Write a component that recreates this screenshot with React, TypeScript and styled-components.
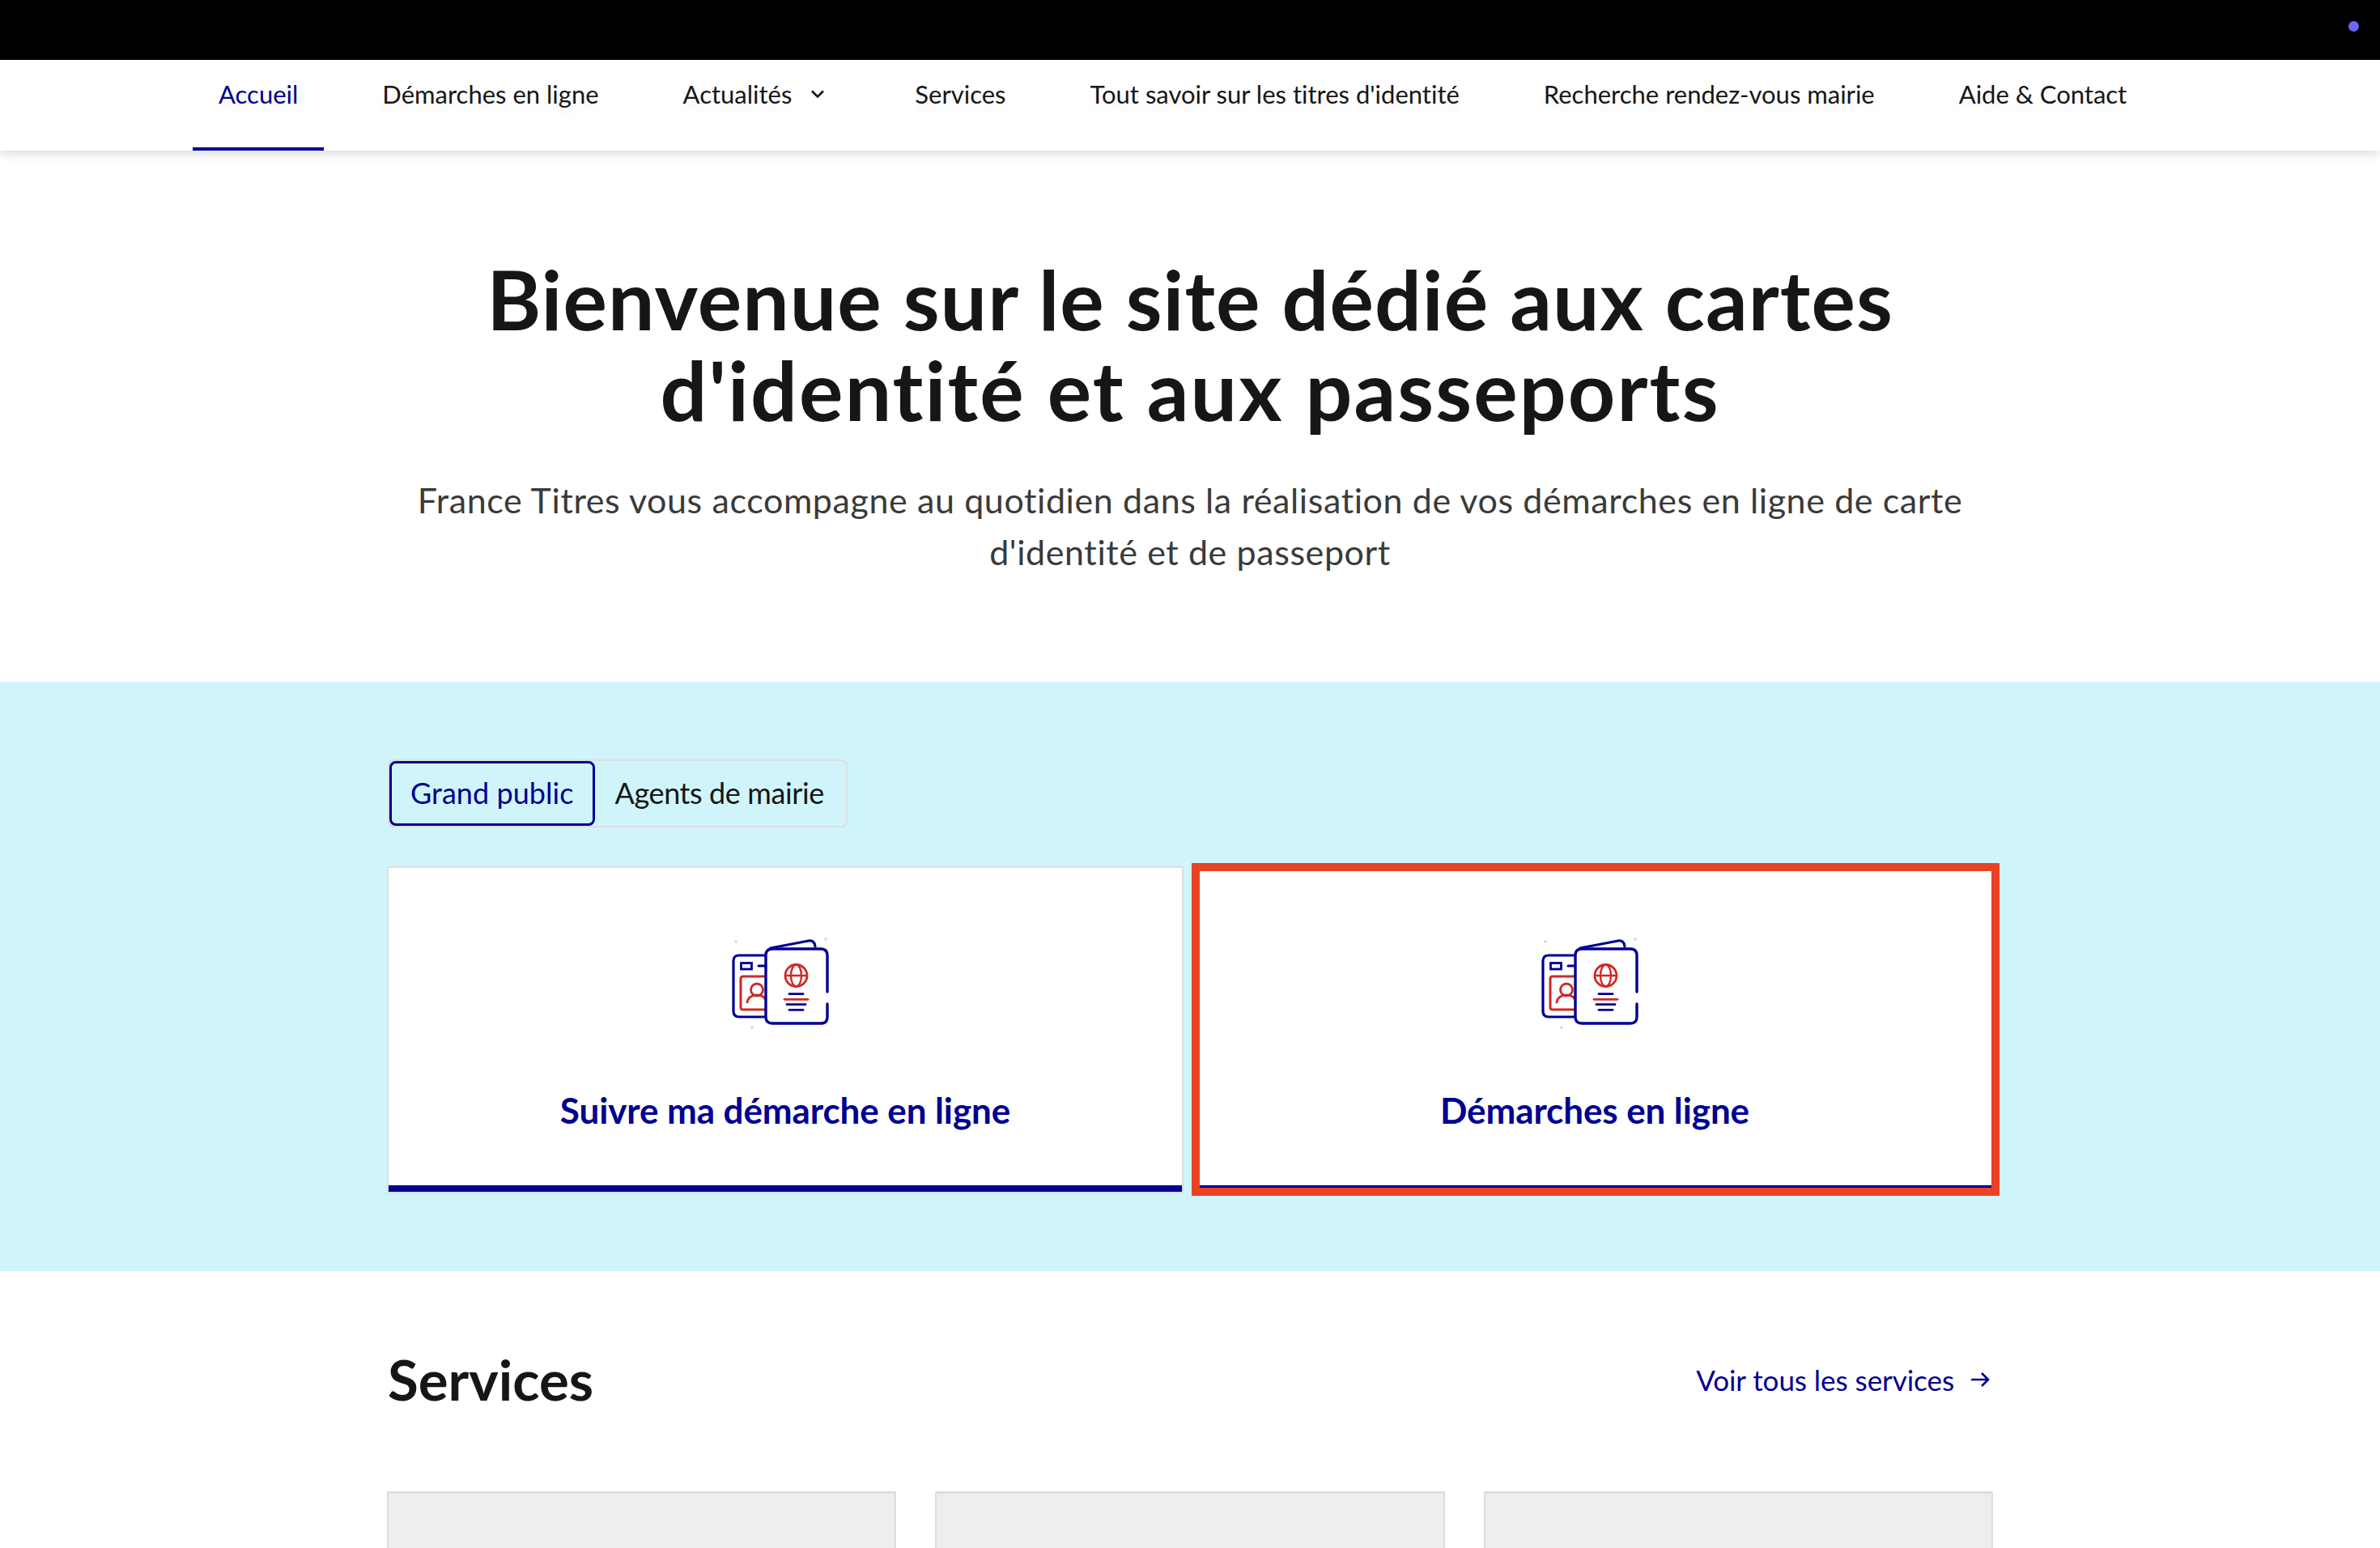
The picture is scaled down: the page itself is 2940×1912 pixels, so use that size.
import React from "react";
import styled, { createGlobalStyle } from "styled-components";

const Global = createGlobalStyle`
  html, body { margin: 0; padding: 0; height: 1912px; overflow: hidden; background: #fff; }
  body { font-family: "Lato", "Liberation Sans", sans-serif; color: #161616; }
  * { box-sizing: border-box; }
`;

const Page = styled.div`
  width: 2940px;
  height: 1912px;
  overflow: hidden;
`;
const TopBar = styled.div`
  height: 74px;
  background: #000;
  display: flex;
  justify-content: flex-end;
  align-items: flex-start;
  padding: 26px 26px 0 0;
`;
const Dot = styled.span`
  width: 13px;
  height: 13px;
  border-radius: 50%;
  background: #6a6af4;
`;
const Nav = styled.nav`
  height: 112px;
  background: #fff;
  display: flex;
  gap: 40px;
  padding-left: 238px;
  box-shadow: 0 4px 12px rgba(0, 0, 22, 0.14);
  position: relative;
`;
const NavItem = styled.a<{ $active?: boolean }>`
  display: flex;
  align-items: center;
  gap: 16px;
  height: 112px;
  padding: 0 32px 29px;
  font-size: 31px;
  letter-spacing: 0px;
  font-variant-ligatures: none;
  color: ${(p) => (p.$active ? "#000091" : "#161616")};
  box-shadow: ${(p) => (p.$active ? "inset 0 -4px 0 #000091" : "none")};
  text-shadow: 0 8px 10px rgba(0, 0, 0, 0.06);
  white-space: nowrap;
`;
const Hero = styled.section`
  padding: 127px 0 127px;
  text-align: center;
`;
const Title = styled.h1`
  margin: 0 0 49px;
  font-size: 102px;
  line-height: 112px;
  font-weight: 700;
  font-variant-ligatures: none;
  color: #161616;
`;
const TitleLine = styled.span<{ $spacing: number }>`
  display: block;
  letter-spacing: ${(p) => p.$spacing}px;
`;
const Lead = styled.p`
  margin: 0 0 1px;
  font-size: 43px;
  line-height: 64px;
  letter-spacing: 0.6px;
  color: #3a3a3a;
`;
const Band = styled.section`
  background: #cff5fb;
  padding: 96px 478px 96px;
`;
const Tabs = styled.div`
  display: inline-flex;
  vertical-align: top;
  height: 84px;
  border: 2px solid #ddd;
  border-radius: 8px;
  margin-left: 1px;
`;
const Tab = styled.div<{ $active?: boolean }>`
  display: flex;
  align-items: center;
  padding: 0 ${(p) => (p.$active ? "23px" : "24px")} 3px;
  padding-left: ${(p) => (p.$active ? "23px" : "22px")};
  font-size: 36px;
  letter-spacing: ${(p) => (p.$active ? "0.05px" : "-0.4px")};
  font-variant-ligatures: none;
  color: ${(p) => (p.$active ? "#000091" : "#161616")};
  border: ${(p) => (p.$active ? "3px solid #000091" : "3px solid transparent")};
  border-radius: 8px;
  white-space: nowrap;
`;
const TabsRow = styled.div`
  height: 84px;
  margin-bottom: 48px;
`;
const CardGrid = styled.div`
  display: grid;
  grid-template-columns: 1fr 1fr;
  gap: 16px;
`;
const Card = styled.div`
  position: relative;
  height: 404px;
  background: #fff;
  border: 2px solid #ddd;
  box-shadow: inset 0 -8px 0 #000091;
  display: flex;
  flex-direction: column;
  align-items: center;
  padding-top: 68px;
`;
const CardTitle = styled.h3`
  margin: 63px 0 0;
  font-size: 44px;
  line-height: 56px;
  font-weight: 700;
  letter-spacing: -0.1px;
  color: #000091;
`;
const Highlight = styled.div`
  position: absolute;
  top: -6px;
  left: -8px;
  right: -10px;
  bottom: -5px;
  border: 10px solid #e94225;
`;
const Services = styled.section`
  padding: 94px 478px 0;
`;
const ServicesHead = styled.div`
  display: flex;
  justify-content: space-between;
  align-items: center;
  height: 80px;
  margin-bottom: 98px;
`;
const ServicesTitle = styled.h2`
  margin: 0 0 0 1px;
  font-size: 69px;
  line-height: 80px;
  font-weight: 700;
  color: #161616;
`;
const MoreLink = styled.a`
  display: flex;
  align-items: center;
  gap: 16px;
  font-size: 35px;
  letter-spacing: -0.05px;
  color: #000091;
  white-space: nowrap;
`;
const ServiceGrid = styled.div`
  display: grid;
  grid-template-columns: repeat(3, 1fr);
  gap: 48px;
`;
const ServiceCard = styled.div`
  height: 300px;
  background: #eee;
  border: 2px solid #ddd;
  border-top-width: 3px;
`;

const Pictogram = () => (
  <svg width="180" height="140" viewBox="0 0 180 140" fill="none" strokeLinecap="round" strokeLinejoin="round" aria-hidden="true">
    <circle cx="29" cy="23" r="1.7" fill="#ced2f0" />
    <circle cx="140" cy="20" r="1.7" fill="#ced2f0" />
    <circle cx="49" cy="129" r="1.7" fill="#ced2f0" />
    <path d="M66 40H33q-7 0-7 7v62q0 7 7 7h33" stroke="#000091" strokeWidth="3.2" />
    <rect x="35.5" y="49.5" width="13" height="7.5" stroke="#000091" strokeWidth="2.8" strokeLinejoin="miter" />
    <path d="M57 53h9" stroke="#000091" strokeWidth="3" />
    <path d="M66 66H38q-3 0-3 3v35q0 3 3 3h28" stroke="#ce2a25" strokeWidth="3" />
    <circle cx="55" cy="82.5" r="7.5" stroke="#ce2a25" strokeWidth="2.8" />
    <path d="M43 98c1-6 6-9 12-9s9 2 11 6" stroke="#ce2a25" strokeWidth="2.8" />
    <path d="M72 31l47-9q7-1 8 7" stroke="#000091" strokeWidth="3.2" />
    <path d="M142 85V40q0-8-8-8H74q-8 0-8 8v76q0 8 8 8h60q8 0 8-8v-16" stroke="#000091" strokeWidth="3.4" fill="#fff" />
    <circle cx="103.5" cy="65" r="13.5" stroke="#ce2a25" strokeWidth="2.8" />
    <ellipse cx="103.5" cy="65" rx="6.5" ry="13.5" stroke="#ce2a25" strokeWidth="2.4" />
    <path d="M90 65h27" stroke="#ce2a25" strokeWidth="2.4" />
    <path d="M95 87.7h17" stroke="#000091" strokeWidth="2.8" />
    <path d="M89 94.3h29" stroke="#ce2a25" strokeWidth="2.8" />
    <path d="M92 100.7h23" stroke="#000091" strokeWidth="2.8" />
    <path d="M95 107.3h17" stroke="#000091" strokeWidth="2.8" />
  </svg>
);

const Chevron = () => (
  <svg width="32" height="32" viewBox="0 0 32 32" fill="none" aria-hidden="true">
    <path d="M9 12.5l7 7 7-7" stroke="#161616" strokeWidth="2.6" />
  </svg>
);
const Arrow = () => (
  <svg width="32" height="32" viewBox="0 0 32 32" fill="none" aria-hidden="true">
    <path d="M5 16h21M18 8l8 8-8 8" stroke="#000091" strokeWidth="2.6" />
  </svg>
);

export default function App() {
  return (
    <Page>
      <Global />
      <TopBar>
        <Dot />
      </TopBar>
      <Nav>
        <NavItem $active>Accueil</NavItem>
        <NavItem>Démarches en ligne</NavItem>
        <NavItem>
          Actualités
          <Chevron />
        </NavItem>
        <NavItem>Services</NavItem>
        <NavItem>Tout savoir sur les titres d'identité</NavItem>
        <NavItem>Recherche rendez-vous mairie</NavItem>
        <NavItem>Aide &amp; Contact</NavItem>
      </Nav>
      <Hero>
        <Title>
          <TitleLine $spacing={1.05}>Bienvenue sur le site dédié aux cartes</TitleLine>
          <TitleLine $spacing={2.1}>d'identité et aux passeports</TitleLine>
        </Title>
        <Lead>
          France Titres vous accompagne au quotidien dans la réalisation de vos démarches en ligne de carte
          <br />
          d'identité et de passeport
        </Lead>
      </Hero>
      <Band>
        <TabsRow>
          <Tabs>
            <Tab $active>Grand public</Tab>
            <Tab>Agents de mairie</Tab>
          </Tabs>
        </TabsRow>
        <CardGrid>
          <Card>
            <Pictogram />
            <CardTitle>Suivre ma démarche en ligne</CardTitle>
          </Card>
          <Card>
            <Pictogram />
            <CardTitle>Démarches en ligne</CardTitle>
            <Highlight />
          </Card>
        </CardGrid>
      </Band>
      <Services>
        <ServicesHead>
          <ServicesTitle>Services</ServicesTitle>
          <MoreLink>
            Voir tous les services
            <Arrow />
          </MoreLink>
        </ServicesHead>
        <ServiceGrid>
          <ServiceCard />
          <ServiceCard />
          <ServiceCard />
        </ServiceGrid>
      </Services>
    </Page>
  );
}
